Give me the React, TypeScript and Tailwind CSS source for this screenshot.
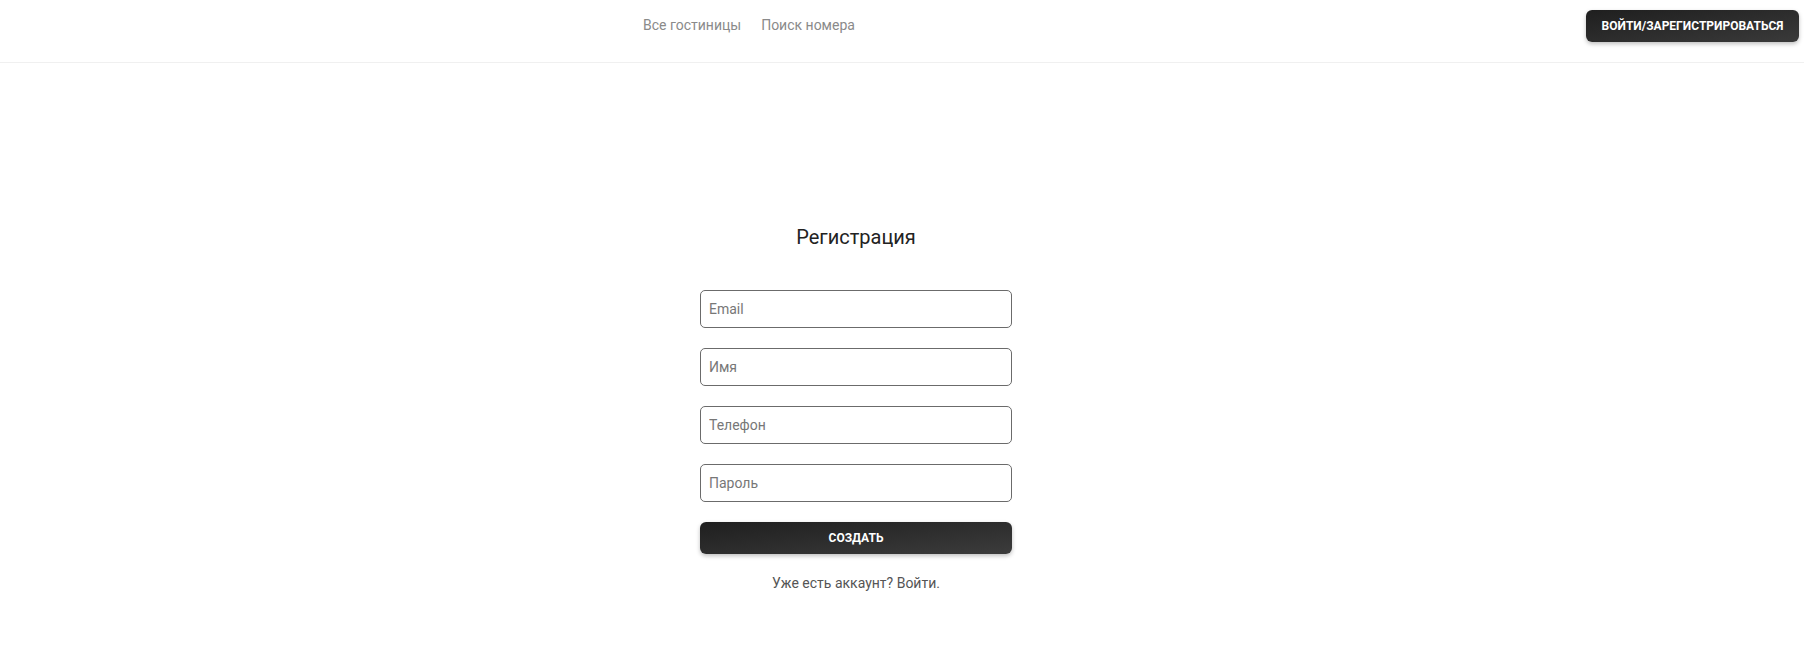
import React from "react";

export default function App() {
  const font = { fontFamily: "Roboto, 'Noto Sans', sans-serif" };
  return (
    <div className="min-h-[665px] bg-white text-[#222]" style={font}>
      <header className="h-[63px] border-b border-[#f0f0f0] flex items-start">
        <nav className="flex gap-[20px] pl-[643px] pt-[15px] text-[14px] text-[#8a8a8a]">
          <a className="cursor-pointer">Все гостиницы</a>
          <a className="cursor-pointer">Поиск номера</a>
        </nav>
        <div className="ml-auto pr-[5px] pt-[10px]">
          <button className="h-[32px] w-[213px] rounded-[6px] bg-gradient-to-br from-[#1f1f1f] to-[#3a3a3a] text-white text-[12px] font-bold uppercase shadow-[0_2px_4px_rgba(0,0,0,0.25)]">
            Войти/Зарегистрироваться
          </button>
        </div>
      </header>
      <main className="flex justify-center pr-[92px]">
        <div className="w-[312px] flex flex-col pt-[160px]">
          <h1 className="text-center text-[20px] leading-[28px] text-[#222]">Регистрация</h1>
          <form className="flex flex-col gap-[20px] mt-[39px]">
            {["Email", "Имя", "Телефон", "Пароль"].map((p) => (
              <input
                key={p}
                placeholder={p}
                type={p === "Пароль" ? "password" : "text"}
                className="h-[38px] w-full rounded-[5px] border border-[#6b6b6b] px-[8px] text-[14px] placeholder:text-[#777] outline-none"
              />
            ))}
            <button
              type="button"
              className="h-[32px] w-full rounded-[6px] bg-gradient-to-br from-[#1f1f1f] to-[#3c3c3c] text-white text-[12px] font-bold uppercase shadow-[0_2px_4px_rgba(0,0,0,0.25)]"
            >
              Создать
            </button>
          </form>
          <p className="text-center text-[14px] text-[#555] mt-[19px]">Уже есть аккаунт? Войти.</p>
        </div>
      </main>
    </div>
  );
}
